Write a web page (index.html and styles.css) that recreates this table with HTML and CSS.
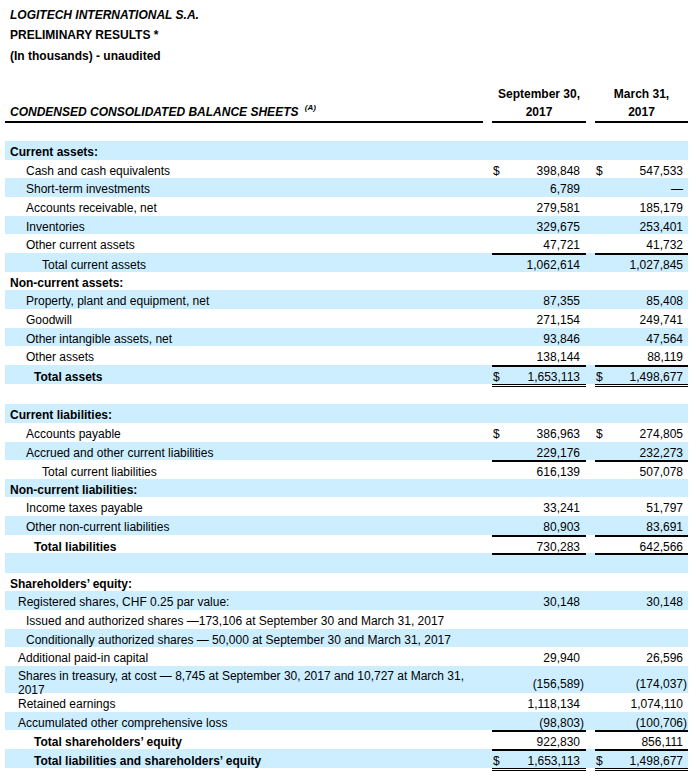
FILE: index.html
```html
<!DOCTYPE html>
<html>
<head>
<meta charset="utf-8">
<link rel="stylesheet" href="styles.css">
</head>
<body>
<div class="page">
  <div class="titles">
    <div class="t1">LOGITECH INTERNATIONAL S.A.</div>
    <div>PRELIMINARY RESULTS *</div>
    <div>(In thousands) - unaudited</div>
  </div>
  <div class="sheet">
    <div class="row head">
      <div class="lbl"><span class="cap">CONDENSED CONSOLIDATED BALANCE SHEETS <sup class="sup">(A)</sup></span></div>
      <div class="sp"></div>
      <div class="n"><span>September 30,</span><span>2017</span></div>
      <div class="sp"></div>
      <div class="n"><span>March 31,</span><span>2017</span></div>
    </div>
    <div class="row blank"></div>

    <div class="row b"><div class="lbl h">Current assets:</div><div class="sp"></div><div class="n c1"></div><div class="sp"></div><div class="n c2"></div></div>
    <div class="row"><div class="lbl i1">Cash and cash equivalents</div><div class="sp"></div><div class="n c1"><span class="d">$</span><span>398,848</span></div><div class="sp"></div><div class="n c2"><span class="d">$</span><span>547,533</span></div></div>
    <div class="row b"><div class="lbl i1">Short-term investments</div><div class="sp"></div><div class="n c1"><span>6,789</span></div><div class="sp"></div><div class="n c2"><span>—</span></div></div>
    <div class="row"><div class="lbl i1">Accounts receivable, net</div><div class="sp"></div><div class="n c1"><span>279,581</span></div><div class="sp"></div><div class="n c2"><span>185,179</span></div></div>
    <div class="row b"><div class="lbl i1">Inventories</div><div class="sp"></div><div class="n c1"><span>329,675</span></div><div class="sp"></div><div class="n c2"><span>253,401</span></div></div>
    <div class="row"><div class="lbl i1">Other current assets</div><div class="sp"></div><div class="n c1"><span>47,721</span></div><div class="sp"></div><div class="n c2"><span>41,732</span></div></div>
    <div class="row b tot"><div class="lbl i2">Total current assets</div><div class="sp"></div><div class="n c1"><span>1,062,614</span></div><div class="sp"></div><div class="n c2"><span>1,027,845</span></div></div>
    <div class="row"><div class="lbl h">Non-current assets:</div><div class="sp"></div><div class="n c1"></div><div class="sp"></div><div class="n c2"></div></div>
    <div class="row b"><div class="lbl i1">Property, plant and equipment, net</div><div class="sp"></div><div class="n c1"><span>87,355</span></div><div class="sp"></div><div class="n c2"><span>85,408</span></div></div>
    <div class="row"><div class="lbl i1">Goodwill</div><div class="sp"></div><div class="n c1"><span>271,154</span></div><div class="sp"></div><div class="n c2"><span>249,741</span></div></div>
    <div class="row b"><div class="lbl i1">Other intangible assets, net</div><div class="sp"></div><div class="n c1"><span>93,846</span></div><div class="sp"></div><div class="n c2"><span>47,564</span></div></div>
    <div class="row"><div class="lbl i1">Other assets</div><div class="sp"></div><div class="n c1"><span>138,144</span></div><div class="sp"></div><div class="n c2"><span>88,119</span></div></div>
    <div class="row b tot dbl"><div class="lbl tb">Total assets</div><div class="sp"></div><div class="n c1"><span class="d">$</span><span>1,653,113</span></div><div class="sp"></div><div class="n c2"><span class="d">$</span><span>1,498,677</span></div></div>
    <div class="row blank"></div>

    <div class="row b"><div class="lbl h">Current liabilities:</div><div class="sp"></div><div class="n c1"></div><div class="sp"></div><div class="n c2"></div></div>
    <div class="row"><div class="lbl i1">Accounts payable</div><div class="sp"></div><div class="n c1"><span class="d">$</span><span>386,963</span></div><div class="sp"></div><div class="n c2"><span class="d">$</span><span>274,805</span></div></div>
    <div class="row b"><div class="lbl i1">Accrued and other current liabilities</div><div class="sp"></div><div class="n c1"><span>229,176</span></div><div class="sp"></div><div class="n c2"><span>232,273</span></div></div>
    <div class="row tot"><div class="lbl i2">Total current liabilities</div><div class="sp"></div><div class="n c1"><span>616,139</span></div><div class="sp"></div><div class="n c2"><span>507,078</span></div></div>
    <div class="row b"><div class="lbl h">Non-current liabilities:</div><div class="sp"></div><div class="n c1"></div><div class="sp"></div><div class="n c2"></div></div>
    <div class="row"><div class="lbl i1">Income taxes payable</div><div class="sp"></div><div class="n c1"><span>33,241</span></div><div class="sp"></div><div class="n c2"><span>51,797</span></div></div>
    <div class="row b"><div class="lbl i1">Other non-current liabilities</div><div class="sp"></div><div class="n c1"><span>80,903</span></div><div class="sp"></div><div class="n c2"><span>83,691</span></div></div>
    <div class="row tot"><div class="lbl tb">Total liabilities</div><div class="sp"></div><div class="n c1"><span>730,283</span></div><div class="sp"></div><div class="n c2"><span>642,566</span></div></div>
    <div class="row b blank2"><div class="lbl"></div><div class="sp"></div><div class="n c1"></div><div class="sp"></div><div class="n c2"></div></div>

    <div class="row"><div class="lbl h">Shareholders’ equity:</div><div class="sp"></div><div class="n c1"></div><div class="sp"></div><div class="n c2"></div></div>
    <div class="row b"><div class="lbl e1">Registered shares, CHF 0.25 par value:</div><div class="sp"></div><div class="n c1"><span>30,148</span></div><div class="sp"></div><div class="n c2"><span>30,148</span></div></div>
    <div class="row"><div class="lbl i1">Issued and authorized shares —173,106 at September 30 and March 31, 2017</div><div class="sp"></div><div class="n c1"></div><div class="sp"></div><div class="n c2"></div></div>
    <div class="row b"><div class="lbl i1">Conditionally authorized shares — 50,000 at September 30 and March 31, 2017</div><div class="sp"></div><div class="n c1"></div><div class="sp"></div><div class="n c2"></div></div>
    <div class="row"><div class="lbl e1">Additional paid-in capital</div><div class="sp"></div><div class="n c1"><span>29,940</span></div><div class="sp"></div><div class="n c2"><span>26,596</span></div></div>
    <div class="row b tall"><div class="lbl e1">Shares in treasury, at cost — 8,745 at September 30, 2017 and 10,727 at March 31,<br>2017</div><div class="sp"></div><div class="n c1"><span>(156,589<span class="rp">)</span></span></div><div class="sp"></div><div class="n c2"><span>(174,037<span class="rp">)</span></span></div></div>
    <div class="row"><div class="lbl e1">Retained earnings</div><div class="sp"></div><div class="n c1"><span>1,118,134</span></div><div class="sp"></div><div class="n c2"><span>1,074,110</span></div></div>
    <div class="row b"><div class="lbl e1">Accumulated other comprehensive loss</div><div class="sp"></div><div class="n c1"><span>(98,803<span class="rp">)</span></span></div><div class="sp"></div><div class="n c2"><span>(100,706<span class="rp">)</span></span></div></div>
    <div class="row tot"><div class="lbl tb">Total shareholders’ equity</div><div class="sp"></div><div class="n c1"><span>922,830</span></div><div class="sp"></div><div class="n c2"><span>856,111</span></div></div>
    <div class="row b tot dbl"><div class="lbl tb">Total liabilities and shareholders’ equity</div><div class="sp"></div><div class="n c1"><span class="d">$</span><span>1,653,113</span></div><div class="sp"></div><div class="n c2"><span class="d">$</span><span>1,498,677</span></div></div>
  </div>
</div>
</body>
</html>
```

FILE: styles.css
```css
body {
  margin: 0;
  background: #fff;
  color: #000;
  font-family: "Liberation Sans", Arial, sans-serif;
  font-size: 12px;
}

.page {
  padding: 4.75px 0 0 5px;
}

.titles {
  padding-left: 5px;
  font-weight: bold;
  line-height: 20.5px;
}

.t1 {
  font-style: italic;
}

.sheet {
  margin-top: 18.75px;
  width: 683px;
}

.row {
  display: grid;
  grid-template-columns: 478px 9px 94px 9px 93px;
  grid-template-rows: 100%;
  height: 18.67px;
}

.row > div {
  display: flex;
  align-items: flex-start;
  box-sizing: border-box;
  white-space: nowrap;
  padding-top: 4px;
  line-height: 14px;
  min-height: 0;
}

.head {
  height: 38px;
}

.head > div {
  padding-top: 0;
}

.head > .lbl {
  align-items: flex-end;
  border-bottom: 2px solid #000;
  padding-left: 5px;
  font-weight: bold;
  font-style: italic;
  line-height: 18px;
}

.sup {
  font-size: 8px;
  line-height: 0;
  vertical-align: 6px;
  margin-left: 3px;
}

.head > .n {
  flex-direction: column;
  justify-content: center;
  align-items: center;
  border-bottom: 2px solid #000;
  font-weight: bold;
  line-height: 18px;
}

.n {
  justify-content: flex-end;
}

.c1 {
  padding-right: 6px;
  padding-left: 1px;
}

.c2 {
  padding-right: 5px;
  padding-left: 1px;
}

.d {
  margin-right: auto;
}

.rp {
  margin-right: -4px;
}

.h {
  padding-left: 5px;
  font-weight: bold;
}

.i1 {
  padding-left: 21px;
}

.i2 {
  padding-left: 37px;
}

.tb {
  padding-left: 29px;
  font-weight: bold;
}

.e1 {
  padding-left: 13px;
}

.b > div {
  background: #cceeff;
  background-clip: padding-box;
}

.tot > div {
  padding-top: 5px;
}

.tot > .n {
  border-top: 2px solid #000;
  padding-top: 3px;
}

.dbl {
  height: 22.33px;
}

.dbl > div {
  border-bottom: 3px solid transparent;
}

.dbl > .n {
  border-bottom: 3px double #000;
}

.blank {
  height: 17px;
}

.head + .blank {
  height: 18px;
}

.blank2 {
  height: 19.33px;
}

.blank2 > .n {
  border-top: 2px solid #000;
}

.tall {
  height: 27px;
}

.tall > .lbl {
  line-height: 13.5px;
  white-space: normal;
}

.tall > .n {
  align-items: flex-end;
  padding-bottom: 2px;
}
```
